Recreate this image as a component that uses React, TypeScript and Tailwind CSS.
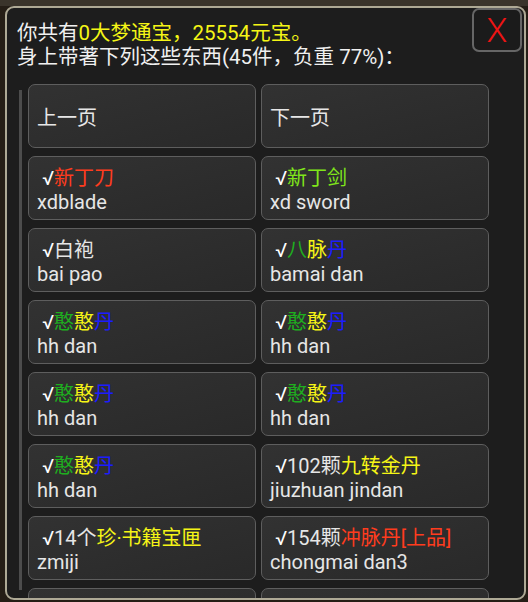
import React from "react";

type Part = { t: string; c?: string };
type Item = { top: Part[]; sub: string };

const RED = "text-[#ff3c1e]";
const LIME = "text-[#80e61a]";
const GREEN = "text-[#1fae1f]";
const YELLOW = "text-[#f5f516]";
const BLUE = "text-[#1c1cff]";

const items: Item[] = [
  { top: [{ t: "新丁刀", c: RED }], sub: "xdblade" },
  { top: [{ t: "新丁剑", c: LIME }], sub: "xd sword" },
  { top: [{ t: "白袍" }], sub: "bai pao" },
  {
    top: [
      { t: "八", c: GREEN },
      { t: "脉", c: YELLOW },
      { t: "丹", c: BLUE },
    ],
    sub: "bamai dan",
  },
  {
    top: [
      { t: "憨", c: GREEN },
      { t: "憨", c: YELLOW },
      { t: "丹", c: BLUE },
    ],
    sub: "hh dan",
  },
  {
    top: [
      { t: "憨", c: GREEN },
      { t: "憨", c: YELLOW },
      { t: "丹", c: BLUE },
    ],
    sub: "hh dan",
  },
  {
    top: [
      { t: "憨", c: GREEN },
      { t: "憨", c: YELLOW },
      { t: "丹", c: BLUE },
    ],
    sub: "hh dan",
  },
  {
    top: [
      { t: "憨", c: GREEN },
      { t: "憨", c: YELLOW },
      { t: "丹", c: BLUE },
    ],
    sub: "hh dan",
  },
  {
    top: [
      { t: "憨", c: GREEN },
      { t: "憨", c: YELLOW },
      { t: "丹", c: BLUE },
    ],
    sub: "hh dan",
  },
  {
    top: [{ t: "102颗" }, { t: "九转金丹", c: YELLOW }],
    sub: "jiuzhuan jindan",
  },
  {
    top: [{ t: "14个" }, { t: "珍·书籍宝匣", c: YELLOW }],
    sub: "zmiji",
  },
  {
    top: [{ t: "154颗" }, { t: "冲脉丹[上品]", c: RED }],
    sub: "chongmai dan3",
  },
  { top: [{ t: "" }], sub: "" },
  { top: [{ t: "" }], sub: "" },
];

const cell =
  "h-[64px] rounded-[7px] border-[1.5px] border-[#5e5e5e] bg-gradient-to-br from-[#323232] to-[#292929] px-[8px] pt-[3px] flex flex-col justify-center text-[20px] leading-[24px] text-[#e6e6e6] whitespace-pre";

export default function App() {
  return (
    <div
      className="w-[528px] h-[602px] overflow-hidden bg-[#251e16] flex flex-col"
      style={{ fontFamily: "Roboto, 'Noto Sans CJK SC', sans-serif" }}
    >
      <div className="h-[6px] bg-[#3a342b] shrink-0" />
      <div className="relative ml-[5px] w-[521px] h-[594px] shrink-0 rounded-[9px] border-2 border-[#aea995] bg-[#1d1d1d] overflow-hidden">
        {/* header */}
        <div className="pl-[10px] pt-[13px] text-[20.5px] leading-[24px] text-[#f0f0f0]">
          <div>
            你共有<span className="text-[#f5f516]">0大梦通宝，25554元宝。</span>
          </div>
          <div>身上带著下列这些东西(45件，负重 77%)：</div>
        </div>

        {/* close button */}
        <div className="absolute top-0 right-[2px] w-[50px] h-[44px] rounded-[7px] border-2 border-[#666] bg-[#1b1b1b] flex items-center justify-center text-[34px] font-light text-[#ee1414] leading-none">
          X
        </div>

        {/* list */}
        <div className="mt-[15px] ml-[12px] flex h-[520px] overflow-hidden">
          <div className="w-[3px] bg-[#4c4c4c] mt-[6px] h-[500px] shrink-0" />
          <div className="ml-[6px] w-[461px] grid grid-cols-2 gap-x-[5px] gap-y-[8px] content-start">
            <div className={cell}>上一页</div>
            <div className={cell}>下一页</div>
            {items.map((it, i) => (
              <div key={i} className={cell}>
                {it.sub !== "" && (
                  <>
                    <div>
                      {" "}
                      <span className="text-white">√</span>
                      {it.top.map((p, j) => (
                        <span key={j} className={p.c}>
                          {p.t}
                        </span>
                      ))}
                    </div>
                    <div>{it.sub}</div>
                  </>
                )}
              </div>
            ))}
          </div>
        </div>
      </div>
    </div>
  );
}
